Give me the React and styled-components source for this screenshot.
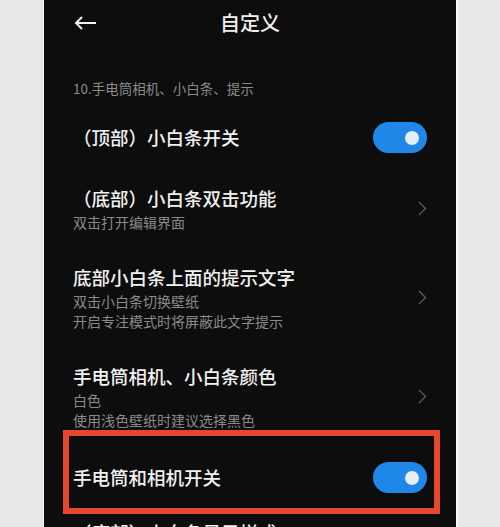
import React from "react";
import styled, { createGlobalStyle } from "styled-components";

const Global = createGlobalStyle`
  html, body { margin: 0; padding: 0; background: #e8e8e8; }
  body { font-family: "Noto Sans CJK SC", "Noto Sans", sans-serif; }
`;

const Page = styled.div`
  height: 527px;
  padding: 0 42px 0 43px;
  box-sizing: border-box;
  overflow: hidden;
`;

const Phone = styled.div`
  height: 100%;
  background: #0d0d0d;
  border-left: 1px solid #f6f6f6;
  border-right: 2px solid #fafafa;
  overflow: hidden;
`;

const TopBar = styled.div`
  height: 45px;
  display: grid;
  grid-template-columns: 1fr auto 1fr;
  align-items: center;
  padding: 0 30px;
`;

const Back = styled.div`
  display: flex;
  align-items: center;
`;

const Title = styled.div`
  color: #f2f2f2;
  font-size: 20px;
  font-weight: 500;
  line-height: 26px;
  padding-top: 1px;
`;

const SectionHeader = styled.div`
  margin: 33px 29px 0;
  color: #8b8b8b;
  font-size: 13.5px;
  line-height: 20px;
`;

const List = styled.div`
  margin-top: 8px;
  padding: 0 29px;
  display: flex;
  flex-direction: column;
`;

const Row = styled.div`
  position: relative;
  display: flex;
  align-items: center;
  justify-content: space-between;
  flex-shrink: 0;
  padding: ${(p) => (p.$tail ? "10px 0 0" : "16px 0")};
`;

const Texts = styled.div`
  display: flex;
  flex-direction: column;
`;

const RowTitle = styled.div`
  color: #f1f1f1;
  font-size: 18.5px;
  font-weight: 500;
  line-height: 27px;
`;

const Sub = styled.div`
  color: #8a8a8a;
  font-size: 14px;
  line-height: 20px;
`;

const Highlight = styled.div`
  position: relative;
  flex-shrink: 0;
  &::after {
    content: "";
    position: absolute;
    left: -10px;
    right: -13px;
    top: -16px;
    bottom: -5px;
    border: 6px solid #e4472b;
    pointer-events: none;
  }
`;

const Toggle = styled.div`
  width: 54px;
  height: 31px;
  border-radius: 16px;
  background: #1f87e8;
  display: flex;
  align-items: center;
  justify-content: flex-end;
  padding-right: 8px;
  box-sizing: border-box;
  flex-shrink: 0;
`;

const Knob = styled.div`
  width: 14px;
  height: 14px;
  border-radius: 50%;
  background: #e7edf4;
`;

const ChevronBox = styled.div`
  display: flex;
  align-items: center;
  flex-shrink: 0;
`;

const Chevron = () => (
  <ChevronBox>
    <svg width="9" height="15" viewBox="0 0 9 15">
      <path d="M1 1 L7.5 7.5 L1 14" fill="none" stroke="#5a5a5a" strokeWidth="1.4" />
    </svg>
  </ChevronBox>
);

const Switch = () => (
  <Toggle>
    <Knob />
  </Toggle>
);

export default function App() {
  return (
    <>
      <Global />
      <Page>
        <Phone>
          <TopBar>
            <Back>
              <svg width="23" height="14" viewBox="0 0 23 14">
                <path d="M22 7 H2 M8 1 L2 7 L8 13" fill="none" stroke="#f2f2f2" strokeWidth="2" />
              </svg>
            </Back>
            <Title>自定义</Title>
            <div />
          </TopBar>
          <SectionHeader>10.手电筒相机、小白条、提示</SectionHeader>
          <List>
            <Row>
              <RowTitle>（顶部）小白条开关</RowTitle>
              <Switch />
            </Row>
            <Row>
              <Texts>
                <RowTitle>（底部）小白条双击功能</RowTitle>
                <Sub>双击打开编辑界面</Sub>
              </Texts>
              <Chevron />
            </Row>
            <Row>
              <Texts>
                <RowTitle>底部小白条上面的提示文字</RowTitle>
                <Sub>双击小白条切换壁纸</Sub>
                <Sub>开启专注模式时将屏蔽此文字提示</Sub>
              </Texts>
              <Chevron />
            </Row>
            <Row>
              <Texts>
                <RowTitle>手电筒相机、小白条颜色</RowTitle>
                <Sub>白色</Sub>
                <Sub>使用浅色壁纸时建议选择黑色</Sub>
              </Texts>
              <Chevron />
            </Row>
            <Highlight>
              <Row>
                <RowTitle>手电筒和相机开关</RowTitle>
                <Switch />
              </Row>
            </Highlight>
            <Row $tail>
              <RowTitle>（底部）小白条显示样式</RowTitle>
            </Row>
          </List>
        </Phone>
      </Page>
    </>
  );
}
